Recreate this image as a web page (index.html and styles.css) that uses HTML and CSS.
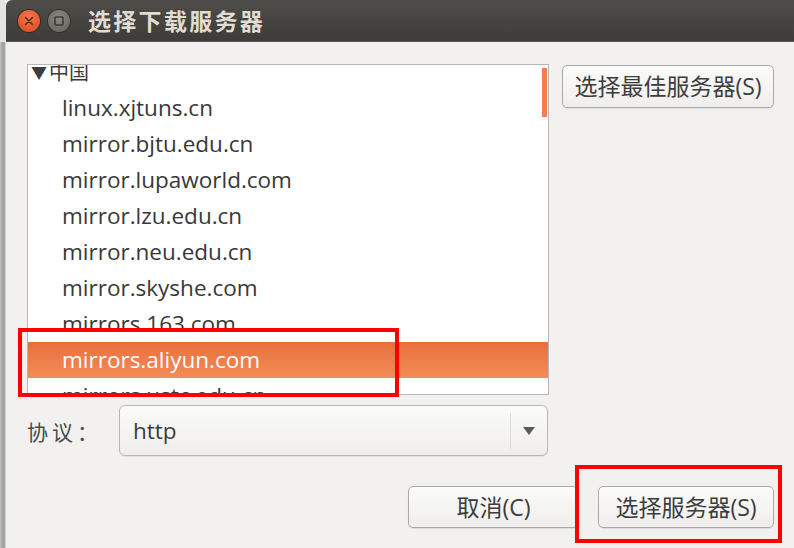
FILE: index.html
```html
<!DOCTYPE html>
<html lang="zh-CN">
<head>
<meta charset="utf-8">
<title>选择下载服务器</title>
<link rel="stylesheet" href="styles.css">
</head>
<body>
<div class="screen">
  <div class="edge"></div>
  <div class="window">
    <div class="titlebar">
      <span class="wbtn close">
        <svg width="22" height="22" viewBox="0 0 22 22"><path d="M7.5 7.5 L14.5 14.5 M14.5 7.5 L7.5 14.5" stroke="#5a2a1a" stroke-width="1.6" stroke-linecap="round"/></svg>
      </span>
      <span class="wbtn max">
        <svg width="22" height="22" viewBox="0 0 22 22"><rect x="7" y="7" width="8" height="8" rx="1" fill="none" stroke="#3a3a38" stroke-width="1.6"/></svg>
      </span>
      <h1 class="title">选择下载服务器</h1>
    </div>
    <div class="content">
      <div class="top">
        <div class="list">
          <div class="rows">
            <div class="row group"><span class="tri">▼</span>中国</div>
            <div class="row">linux.xjtuns.cn</div>
            <div class="row">mirror.bjtu.edu.cn</div>
            <div class="row">mirror.lupaworld.com</div>
            <div class="row">mirror.lzu.edu.cn</div>
            <div class="row">mirror.neu.edu.cn</div>
            <div class="row">mirror.skyshe.com</div>
            <div class="row">mirrors.163.com</div>
            <div class="row selected">mirrors.aliyun.com</div>
            <div class="row">mirrors.ustc.edu.cn</div>
          </div>
          <div class="thumb"></div>
        </div>
        <button class="btn best">选择最佳服务器(S)</button>
      </div>
      <div class="proto">
        <span class="label">协议：</span>
        <div class="combo">
          <span class="value">http</span>
          <span class="sep"></span>
          <span class="arrow"></span>
        </div>
      </div>
      <div class="actions">
        <button class="btn cancel">取消(C)</button>
        <button class="btn ok">选择服务器(S)</button>
      </div>
    </div>
  </div>
  <div class="mark mark-row"></div>
  <div class="mark mark-btn"></div>
</div>
</body>
</html>
```
FILE: styles.css
```css
* { box-sizing: border-box; }
html, body { margin: 0; padding: 0; }
body {
  width: 794px;
  height: 548px;
  overflow: hidden;
  background: #f2f1f0;
  font-family: "Open Sans", "Noto Sans CJK SC", sans-serif;
  color: #3c3c3c;
}
.screen {
  position: relative;
  display: flex;
  width: 794px;
  height: 548px;
  background: #f2f1f0;
}
.edge {
  width: 6px;
  flex: none;
  background: linear-gradient(#e4e4e2 0, #e4e4e2 42px, transparent 42px),
              linear-gradient(90deg, #c4c4c2 0, #a8a8a6 2px, #9c9c9a 4px, #b9b9b7 5px, #e6e6e4 6px);
}
.window {
  flex: 1;
  display: flex;
  flex-direction: column;
  background: #f2f1f0;
}
.titlebar {
  height: 42px;
  flex: none;
  display: flex;
  align-items: center;
  background: linear-gradient(#4e4d49, #3d3c38);
  border-top-left-radius: 6px;
  border-bottom: 1px solid #5a5955;
  padding-left: 12px;
}
.wbtn {
  width: 22px;
  height: 22px;
  border-radius: 50%;
  display: inline-flex;
  margin-right: 8px;
}
.wbtn.close {
  background: radial-gradient(circle at 50% 35%, #f47a4f, #e4532a 70%, #c8451f);
  box-shadow: 0 0 0 1px #3a2a22;
}
.wbtn.max {
  background: radial-gradient(circle at 50% 35%, #8a8984, #6c6b66 70%, #5a5955);
  box-shadow: 0 0 0 1px #33322f;
}
.title {
  margin: 0 0 0 10px;
  font-family: "Noto Sans CJK SC", sans-serif;
  font-weight: 700;
  font-size: 23px;
  letter-spacing: 2.3px;
  color: #e0dcd3;
  line-height: 1;
}
.content {
  flex: 1;
  display: flex;
  flex-direction: column;
  padding: 22px 22px 0 21px;
}
.top {
  display: flex;
  align-items: flex-start;
  gap: 13px;
}
.list {
  position: relative;
  width: 522px;
  height: 331px;
  border: 1px solid #b8b6b2;
  background: #fff;
  overflow: hidden;
}
.rows {
  margin-top: -11px;
}
.row {
  height: 36px;
  line-height: 36px;
  font-size: 22.5px;
  padding-left: 34px;
  color: #383838;
  white-space: nowrap;
}
.row.group {
  padding-left: 1px;
  font-family: "Noto Sans CJK SC", sans-serif;
  font-size: 20px;
  color: #3c3c3c;
}
.tri {
  display: inline-block;
  width: 20px;
  font-size: 16px;
  text-align: center;
  vertical-align: top;
  color: #3c3c3c;
}
.row.selected {
  background: linear-gradient(#e8703d, #f48b58);
  color: #ffffff;
}
.thumb {
  position: absolute;
  right: 1px;
  top: 3px;
  width: 5px;
  height: 49px;
  background: #ef7f50;
}
.btn {
  font-family: "Open Sans", "Noto Sans CJK SC", sans-serif;
  font-size: 23px;
  color: #3c3c3c;
  border: 1px solid #abaaa6;
  border-radius: 5px;
  background: linear-gradient(#fbfbfa, #efeeec);
  box-shadow: 0 1px 1px rgba(0,0,0,0.08);
  padding: 0;
  line-height: 1;
}
.btn.best {
  width: 212px;
  height: 43px;
  margin-top: 1px;
}
.proto {
  display: flex;
  align-items: center;
  margin-top: 10px;
  height: 51px;
}
.label {
  width: 92px;
  font-family: "Noto Sans CJK SC", sans-serif;
  font-size: 21px;
  letter-spacing: 4px;
  color: #4a4a4a;
}
.combo {
  position: relative;
  width: 429px;
  height: 51px;
  display: flex;
  align-items: center;
  border: 1px solid #b9b7b3;
  border-radius: 6px;
  background: linear-gradient(#fbfbfa, #efeeec);
  box-shadow: 0 1px 1px rgba(0,0,0,0.06);
}
.value {
  flex: 1;
  padding-left: 13px;
  font-size: 22.5px;
  color: #3c3c3c;
}
.sep {
  width: 1px;
  height: 36px;
  background: #dddcda;
}
.arrow {
  width: 36px;
  height: 8px;
  display: flex;
  justify-content: center;
}
.arrow::before {
  content: "";
  border-left: 6px solid transparent;
  border-right: 6px solid transparent;
  border-top: 8px solid #5a5a58;
}
.actions {
  display: flex;
  justify-content: flex-end;
  gap: 19px;
  margin-top: 30px;
}
.btn.cancel {
  width: 171px;
  height: 42px;
}
.btn.ok {
  width: 176px;
  height: 42px;
}
.mark {
  position: absolute;
  border: 4px solid #ff0000;
}
.mark-row {
  left: 18px;
  top: 328px;
  width: 381px;
  height: 69px;
}
.mark-btn {
  left: 575px;
  top: 465px;
  width: 207px;
  height: 78px;
}
```
